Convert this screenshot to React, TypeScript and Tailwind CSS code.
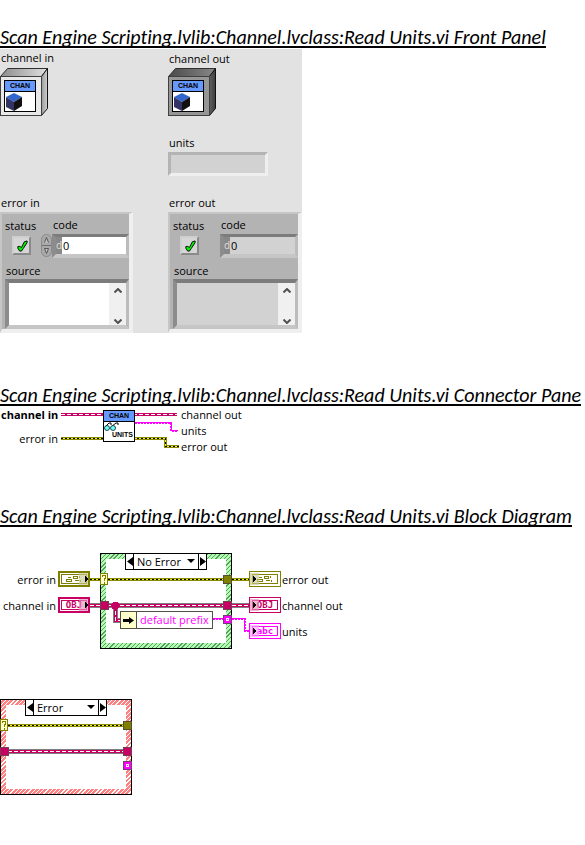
import type { ReactNode } from "react";

function Heading({ children }: { children: ReactNode }) {
  return (
    <h2 className="h-5 w-fit overflow-hidden whitespace-nowrap border-b-2 border-black font-['Calibri','Carlito','Lato',sans-serif] text-[20px] italic leading-[18px] [font-variant-ligatures:none]">
      {children}
    </h2>
  );
}

function ClassBadge({ dark = false }: { dark?: boolean }) {
  const id = dark ? "out" : "in";
  return (
    <svg width="48" height="48" viewBox="0 0 48 48" role="img" aria-label="Channel object">
      <defs>
        <linearGradient id={`top-${id}`} x1="0" x2="1" y1="0" y2="0">
          <stop offset="0" stopColor={dark ? "#4a4a4a" : "#8c8c8c"} />
          <stop offset="1" stopColor={dark ? "#888888" : "#e0e0e0"} />
        </linearGradient>
        <linearGradient id={`side-${id}`} x1="0" x2="1" y1="0" y2="0">
          <stop offset="0" stopColor={dark ? "#606060" : "#9a9a9a"} />
          <stop offset="1" stopColor={dark ? "#3c3c3c" : "#d0d0d0"} />
        </linearGradient>
      </defs>
      <path d="M.5 8.5 7.5.5h40l-6 8z" fill={`url(#top-${id})`} stroke="#303030" />
      <path d="m41.5 8.5 6-8v40l-6 7z" fill={`url(#side-${id})`} stroke="#101010" />
      <rect x=".5" y="8.5" width="41" height="39" fill={dark ? "#969696" : "#e8e8e8"} stroke="#404040" />
      <rect x="4.5" y="12.5" width="31" height="31" fill="#fff" stroke="#000" />
      <rect x="5" y="13" width="30" height="10" fill="#6699ff" />
      <path d="M5 23.5h30" stroke="#000" />
      <text x="20" y="20" textAnchor="middle" fontFamily="Liberation Sans" fontWeight="bold" fontSize="7" fill="#000">
        CHAN
      </text>
      <path d="m14 25 8 4-8 5-8-5z" fill="#3366cc" />
      <path d="m6 29 8 5v9l-8-4z" fill="#333366" />
      <path d="m22 29-8 5v9l8-5z" fill="#111" />
    </svg>
  );
}

function Chevron({ up = false }: { up?: boolean }) {
  return (
    <svg className="block" width="8" height="5" viewBox="0 0 8 5" fill="none" stroke="#505050" strokeWidth="2" aria-hidden="true">
      <path d={up ? "m.5 4.500 3.500-3.500 3.500 3.500" : "m.5.500 3.500 3.500 3.500-3.500"} />
    </svg>
  );
}

function ErrorCluster({ name, output = false }: { name: string; output?: boolean }) {
  const fill = output ? "bg-[#d2d2d2]" : "bg-white";
  const bevel = "border-t-[#7c7c7c] border-l-[#8c8c8c] border-b-[#c6c6c6] border-r-[#bcbcbc]";
  return (
    <fieldset className="flex h-[121px] min-w-0 flex-col border-2 border-r-4 border-b-4 border-l-[#c6c6c6] border-t-[#c6c6c6] border-b-[#efefef] border-r-[#efefef] bg-[#b3b3b3] pl-[3px]">
      <div className="flex h-[50px] pt-[3px]">
        <div className="w-9 shrink-0">
          <span id={`${name}-status`} className="block h-[19px] leading-[18px]">status</span>
          <button
            type="button"
            aria-labelledby={`${name}-status`}
            className="ml-[7px] flex size-[19px] items-center justify-center border-2 border-b-[#8a8a8a] border-l-[#cfcfcf] border-r-[#8a8a8a] border-t-[#cfcfcf] bg-[#d6d6d6]"
          >
            <svg width="12" height="12" viewBox="0 0 13 13" aria-hidden="true">
              <path d="M2 7h2l2 1 3-6 3-1v2L8 9l-2 3H4L2 9z" fill="#00f000" stroke="#000" />
            </svg>
          </button>
        </div>
        <div className="min-w-0 flex-1">
          <label htmlFor={`${name}-code`} className="block h-[17px] pl-3 leading-4">code</label>
          <div className="flex">
            {output ? (
              <span className="w-[11px]" />
            ) : (
              <button type="button" aria-label="Step code" className="w-[11px]">
                <svg width="11" height="24" viewBox="0 0 11 24">
                  <rect x=".5" y=".5" width="10" height="22" rx="5" fill="#a9a9a9" stroke="#8a8a8a" />
                  <path d="M1 11.5h9" stroke="#707070" />
                  <path d="m3.500 8.500 2-5 2 5M3.500 14.500l2 5 2-5z" fill="#c8c8c8" stroke="#555" />
                </svg>
              </button>
            )}
            <div className={`flex h-6 min-w-0 flex-1 border-[3px] border-b-4 border-l-4 ${bevel}`}>
              <span className="w-[6px] shrink-0 bg-[#888] text-[10px] leading-[17px] text-[#ddd]">d</span>
              <input
                id={`${name}-code`}
                defaultValue="0"
                readOnly={output}
                className={`min-w-0 flex-1 pl-px leading-[17px] outline-none ${fill}`}
              />
            </div>
          </div>
        </div>
      </div>
      <label htmlFor={`${name}-source`} className="h-[15px] pl-px leading-[13px]">source</label>
      <div className={`flex h-[50px] border-4 border-r-[3px] ${bevel}`}>
        <textarea
          id={`${name}-source`}
          readOnly={output}
          className={`min-w-0 flex-1 resize-none outline-none ${fill}`}
        />
        <div className="flex w-[17px] shrink-0 flex-col items-center justify-between bg-[#f0f0f0] pb-px pt-[5px]">
          <button type="button" aria-label="Scroll up"><Chevron up /></button>
          <button type="button" aria-label="Scroll down"><Chevron /></button>
        </div>
      </div>
    </fieldset>
  );
}

function FrontPanel() {
  return (
    <div className="mt-px flex h-[284px] w-[302px] bg-[#e2e2e2]">
      <div className="flex w-[133px] flex-col">
        <span className="h-[19px] pl-px leading-[18px]">channel in</span>
        <ClassBadge />
        <span className="mt-auto h-[18px] pl-px leading-[17px]">error in</span>
        <ErrorCluster name="error-in" />
      </div>
      <div className="ml-[35px] flex min-w-0 flex-1 flex-col">
        <span className="h-[19px] pl-px leading-[19px]">channel out</span>
        <ClassBadge dark />
        <label htmlFor="units" className="mt-[19px] h-[17px] pl-px leading-4">units</label>
        <input
          id="units"
          readOnly
          className="h-6 w-[100px] border-[3px] border-b-[#efefef] border-l-[#b4b4b4] border-r-[#efefef] border-t-[#b4b4b4] bg-[#d2d2d2] outline-none"
        />
        <span className="mt-auto h-[18px] pl-px leading-[17px]">error out</span>
        <ErrorCluster name="error-out" output />
      </div>
    </div>
  );
}

function ErrorWire({ d }: { d: string }) {
  return (
    <g fill="none">
      <path d={d} stroke="#8c8c00" strokeWidth="3" />
      <path d={d} stroke="#f0f030" strokeWidth="1" />
      <path d={d} stroke="#000" strokeWidth="1" strokeDasharray="2 2" />
    </g>
  );
}

function ClassWire({ d, outlined = false }: { d: string; outlined?: boolean }) {
  return (
    <g fill="none">
      {outlined && <path d={d} stroke="#808080" strokeWidth="5" />}
      <path d={d} stroke="#c80064" strokeWidth="3" />
      <path d={d} stroke="#fff" strokeWidth="1" strokeDasharray="4 2" />
    </g>
  );
}

function StringWire({ d }: { d: string }) {
  return (
    <g fill="none" stroke="#ff00ff">
      <path d={d} strokeWidth="2" strokeDasharray="2 1" />
      <path d={d} strokeWidth="1" />
    </g>
  );
}

function ConnectorPane() {
  return (
    <figure className="relative h-[50px]">
      <svg width="260" height="50" viewBox="0 0 260 50" shapeRendering="crispEdges" aria-hidden="true">
        <ClassWire d="M61 8.500H177" />
        <StringWire d="M135 16.500h36v8h7" />
        <ErrorWire d="M61 32.500h104.500v8H179" />
        <rect x="103.500" y="4.500" width="31" height="31" fill="#fff" stroke="#000" />
        <rect x="104" y="5" width="30" height="10" fill="#6699ff" />
        <path d="M104 15.500h30" stroke="#000" />
        <g shapeRendering="auto">
          <path d="m105 21 4-4h2v2M111 21l5-4h2v2" fill="none" stroke="#000" />
          <circle cx="107" cy="22" r="2.500" fill="#66ffff" stroke="#000" strokeWidth=".7" />
          <circle cx="113" cy="22" r="2.500" fill="#66ffff" stroke="#000" strokeWidth=".7" />
        </g>
        <text x="119" y="12" textAnchor="middle" fontFamily="Liberation Sans" fontWeight="bold" fontSize="7">CHAN</text>
        <text x="133" y="31" textAnchor="end" fontFamily="Liberation Sans" fontWeight="bold" fontSize="7">UNITS</text>
      </svg>
      <figcaption>
        <span className="absolute left-px top-px font-bold leading-4">channel in</span>
        <span className="absolute left-0 top-[25px] w-[58px] text-right leading-4">error in</span>
        <span className="absolute left-[181px] top-px leading-4">channel out</span>
        <span className="absolute left-[181px] top-[17px] leading-4">units</span>
        <span className="absolute left-[181px] top-[33px] leading-4">error out</span>
      </figcaption>
    </figure>
  );
}

function CaseStructure({ value, tone, wired = false }: { value: string; tone: string; wired?: boolean }) {
  return (
    <div className={`relative h-24 w-[132px] border border-black p-[5px] ${tone}`}>
      <div className="h-full bg-white" />
      <svg className="absolute -left-px -top-px" width="132" height="96" viewBox="0 0 132 96" shapeRendering="crispEdges" aria-hidden="true">
        <ErrorWire d="M8 26.500H124" />
        {wired && <ClassWire outlined d="M15.500 52V67.500H22" />}
        <ClassWire outlined d="M8 52.500H124" />
        {wired && <circle cx="15.500" cy="52.500" r="4" fill="#c80064" />}
        {wired && <StringWire d="M113 65.500h10" />}
        <rect x=".5" y="20.500" width="7" height="11" fill="#ffffcc" stroke="#808000" />
        <path d="M2.500 24v-1.500h3v3h-1.500v2M4 29v1.500" fill="none" stroke="#808000" />
        <rect x="123.500" y="22.500" width="8" height="8" fill="#808000" stroke="#505030" />
        <rect x=".5" y="48.500" width="8" height="8" fill="#c80064" stroke="#704050" />
        <rect x="123.500" y="48.500" width="8" height="8" fill="#c80064" stroke="#704050" />
        <rect x="123.500" y="62.500" width="8" height="8" fill="#ff00ff" stroke="#704070" />
        <rect x="126.500" y="65.500" width="2" height="2" fill="#ff00ff" stroke="#fff" />
      </svg>
      <div className="absolute -top-px left-6 flex h-[17px] w-[82px] border border-black bg-white">
        <button type="button" aria-label="Previous case" className="flex w-[8px] items-center justify-center border-r border-black">
          <svg width="6" height="9" viewBox="0 0 6 9"><path d="M6 0v9L0 4.500z" /></svg>
        </button>
        <div className="relative min-w-0 flex-1">
          <select aria-label="Case" defaultValue={value} className="block h-[15px] w-full appearance-none bg-transparent pl-[3px] leading-[15px] outline-none">
            <option>No Error</option>
            <option>Error</option>
          </select>
          <svg className="pointer-events-none absolute right-[3px] top-[5px]" width="8" height="4" viewBox="0 0 8 4"><path d="M0 0h8L4 4z" /></svg>
        </div>
        <button type="button" aria-label="Next case" className="flex w-[8px] items-center justify-center border-l border-black">
          <svg width="6" height="9" viewBox="0 0 6 9"><path d="M0 0v9l6-4.500z" /></svg>
        </button>
      </div>
    </div>
  );
}

type TerminalProps = { x: number; y: number; color: string; soft: string; text?: string; control?: boolean };

function Terminal({ x, y, color, soft, text, control = false }: TerminalProps) {
  return (
    <g transform={`translate(${x} ${y})`}>
      <rect width="32" height="16" fill={color} />
      {control ? <rect x="2" y="2" width="28" height="12" fill="#fff" /> : <rect x="1" y="1" width="30" height="14" fill="#fff" />}
      <rect x="3.500" y="3.500" width="25" height="9" fill="#fff" stroke={color} />
      {text ? (
        <text x="16" y="11" textAnchor="middle" fontFamily="DejaVu Sans Mono" fontWeight="bold" fontSize="9" fill={color}>{text}</text>
      ) : (
        <path d="M8.500 8.500h5v2h-5zM10 6.500h3M15.500 5.500h4v2h-4zM17 9.500h4M21.500 5v2M22 8.500v2" fill="none" stroke={color} />
      )}
      <rect x={control ? 21 : 1} y="2" width="9" height="12" fill={soft} opacity=".65" />
      <path d={control ? "M27 4.500v7l4-3.500z" : "M4 4.500v7l4-3.500z"} fill="#000" />
    </g>
  );
}

function NoErrorDiagram() {
  return (
    <figure className="relative h-24 pl-[100px]">
      <CaseStructure wired value="No Error" tone="bg-[repeating-linear-gradient(135deg,#609868_0_1px,#b0ffb0_1px_3px)]" />
      <svg className="absolute left-0 top-0" width="350" height="96" viewBox="0 0 350 96" shapeRendering="crispEdges" aria-hidden="true">
        <ErrorWire d="M90 26.500h10" />
        <ErrorWire d="M232 26.500h17" />
        <ClassWire outlined d="M90 52.500h10" />
        <ClassWire outlined d="M232 52.500h17" />
        <StringWire d="M232 65.500h12.500v12h5" />
        <Terminal control x={58} y={18} color="#808000" soft="#c8c890" />
        <Terminal control x={58} y={44} color="#c80064" soft="#e890bc" text="OBJ" />
        <Terminal x={249} y={18} color="#808000" soft="#c8c890" />
        <Terminal x={249} y={44} color="#c80064" soft="#e890bc" text="OBJ" />
        <Terminal x={249} y={70} color="#ff00ff" soft="#ffa0ff" text="abc" />
      </svg>
      <div className="absolute left-[120px] top-[58px] flex h-[18px] w-[93px] border border-[#505040] bg-white leading-4 text-[#ff00ff]">
        <span className="flex w-4 items-center justify-center border-r border-[#505040] bg-[#ffffcc]">
          <svg width="11" height="7" viewBox="0 0 11 7" aria-hidden="true"><path d="M0 2h6V0l5 3.500L6 7V5H0z" /></svg>
        </span>
        <span className="whitespace-nowrap pl-[3px]">default prefix</span>
      </div>
      <figcaption>
        <span className="absolute left-0 top-[19px] w-14 text-right leading-4">error in</span>
        <span className="absolute left-0 top-[45px] w-14 text-right leading-4">channel in</span>
        <span className="absolute left-[282px] top-[19px] leading-4">error out</span>
        <span className="absolute left-[282px] top-[45px] leading-4">channel out</span>
        <span className="absolute left-[282px] top-[71px] leading-4">units</span>
      </figcaption>
    </figure>
  );
}

export default function App() {
  return (
    <main className="overflow-hidden bg-white pb-12 pt-7 font-['Open_Sans','Noto_Sans',sans-serif] text-[11px] text-black">
      <section>
        <Heading>Scan Engine Scripting.lvlib:Channel.lvclass:Read Units.vi Front Panel</Heading>
        <FrontPanel />
      </section>
      <section className="mt-[53px]">
        <Heading>Scan Engine Scripting.lvlib:Channel.lvclass:Read Units.vi Connector Pane</Heading>
        <ConnectorPane />
      </section>
      <section className="mt-[51px]">
        <Heading>Scan Engine Scripting.lvlib:Channel.lvclass:Read Units.vi Block Diagram</Heading>
        <div className="mt-[26px] flex flex-col gap-[50px]">
          <NoErrorDiagram />
          <CaseStructure value="Error" tone="bg-[repeating-linear-gradient(135deg,#ffffff_0_1px,#ff8080_1px_3px)]" />
        </div>
      </section>
    </main>
  );
}
